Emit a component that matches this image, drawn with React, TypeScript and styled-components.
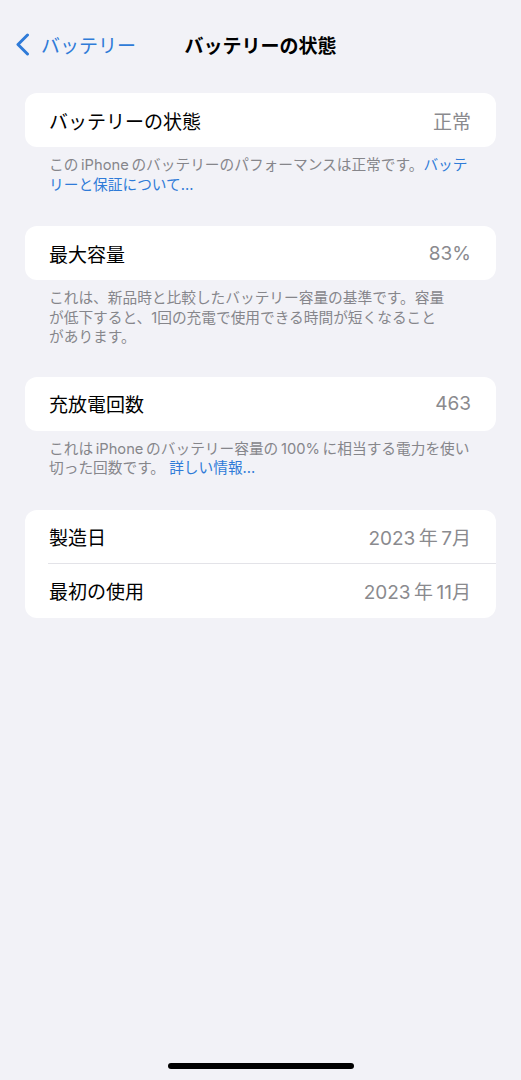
import React from "react";
import styled, { createGlobalStyle } from "styled-components";

const GlobalStyle = createGlobalStyle`
  html, body {
    margin: 0;
    padding: 0;
    background: #f2f2f7;
  }
  body {
    font-family: "Inter", "Noto Sans CJK JP", sans-serif;
    -webkit-font-smoothing: antialiased;
  }
`;

const Screen = styled.div`
  min-height: 100vh;
  display: flex;
  flex-direction: column;
  background: #f2f2f7;
`;

const NavBar = styled.header`
  height: 89px;
  display: grid;
  grid-template-columns: 1fr auto 1fr;
  align-items: center;
  padding: 0 15px;
  box-sizing: border-box;
`;

const BackButton = styled.button`
  justify-self: start;
  display: flex;
  align-items: center;
  gap: 11px;
  border: none;
  background: none;
  padding: 0;
  color: #2f7bd8;
  font-family: inherit;
  font-size: 19px;
  cursor: pointer;
`;

const Title = styled.h1`
  margin: 0;
  font-size: 19px;
  font-weight: 700;
  color: #000;
`;

const Content = styled.main`
  padding: 4px 25px 0;
  display: flex;
  flex-direction: column;
`;

const Section = styled.section<{ $gap?: number }>`
  margin-bottom: ${(p) => p.$gap ?? 31}px;
`;

const Card = styled.div`
  background: #fff;
  border-radius: 12px;
  overflow: hidden;
`;

const Row = styled.div<{ $divider?: boolean }>`
  height: 54px;
  display: flex;
  align-items: center;
  justify-content: space-between;
  padding: 0 25px 0 24px;
  position: relative;
  ${(p) =>
    p.$divider &&
    `
    &::after {
      content: "";
      position: absolute;
      left: 23px;
      right: 0;
      bottom: 0;
      height: 1px;
      background: #e3e3e8;
    }
  `}
`;

const Label = styled.span`
  font-size: 19px;
  color: #000;
`;

const Value = styled.span`
  font-size: 19px;
  color: #8a8a8e;
`;

const Footer = styled.p`
  margin: 0;
  padding: 9px 25px 0 24px;
  font-size: 14.7px;
  line-height: 19.5px;
  color: #86868b;
  white-space: nowrap;
`;

const Link = styled.a`
  color: #2f7bd8;
  text-decoration: none;
`;

const HomeIndicator = styled.div`
  margin: auto auto 11px;
  width: 186px;
  height: 6px;
  border-radius: 3px;
  background: #000;
`;

const Chevron = () => (
  <svg width="15" height="23" viewBox="0 0 15 23" fill="none">
    <path
      d="M12.5 2 L3 11.5 L12.5 21"
      stroke="#2f7bd8"
      strokeWidth="3"
      strokeLinecap="round"
      strokeLinejoin="round"
    />
  </svg>
);

// thin space used between Japanese and Latin runs
const t = "\u2009";

export default function App() {
  return (
    <Screen>
      <GlobalStyle />
      <NavBar>
        <BackButton>
          <Chevron />
          バッテリー
        </BackButton>
        <Title>バッテリーの状態</Title>
        <span />
      </NavBar>
      <Content>
        <Section>
          <Card>
            <Row>
              <Label>バッテリーの状態</Label>
              <Value>正常</Value>
            </Row>
          </Card>
          <Footer>
            この{t}iPhone{t}のバッテリーのパフォーマンスは正常です。<Link>バッテ</Link>
            <br />
            <Link>リーと保証について...</Link>
          </Footer>
        </Section>
        <Section $gap={29}>
          <Card>
            <Row>
              <Label>最大容量</Label>
              <Value>83%</Value>
            </Row>
          </Card>
          <Footer>
            これは、新品時と比較したバッテリー容量の基準です。容量
            <br />
            が低下すると、1回の充電で使用できる時間が短くなること
            <br />
            があります。
          </Footer>
        </Section>
        <Section>
          <Card>
            <Row>
              <Label>充放電回数</Label>
              <Value>463</Value>
            </Row>
          </Card>
          <Footer>
            これは{t}iPhone{t}のバッテリー容量の{t}100%{t}に相当する電力を使い
            <br />
            切った回数です。 <Link>詳しい情報...</Link>
          </Footer>
        </Section>
        <Section>
          <Card>
            <Row $divider>
              <Label>製造日</Label>
              <Value>2023{t}年{t}7月</Value>
            </Row>
            <Row>
              <Label>最初の使用</Label>
              <Value>2023{t}年{t}11月</Value>
            </Row>
          </Card>
        </Section>
      </Content>
      <HomeIndicator />
    </Screen>
  );
}
